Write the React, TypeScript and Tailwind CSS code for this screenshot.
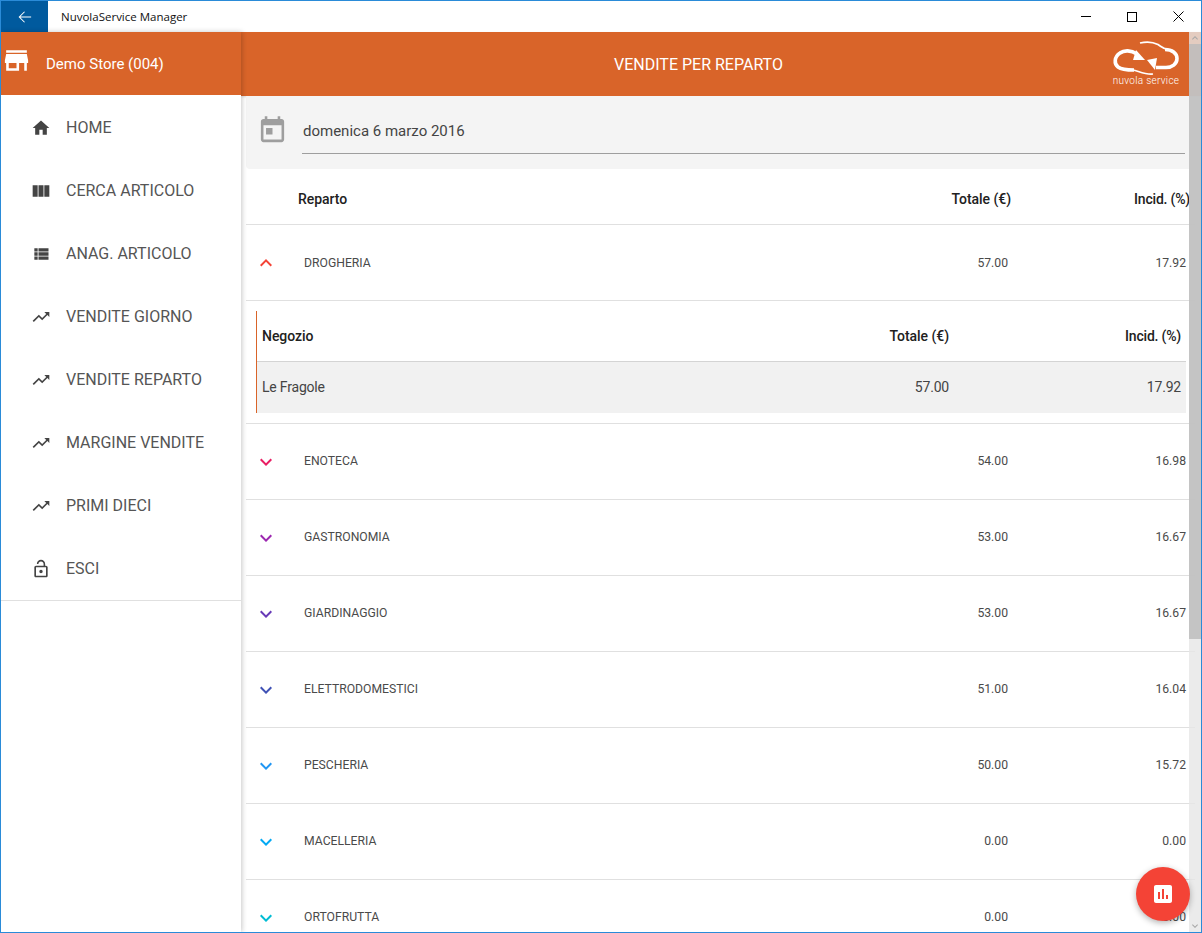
import React from "react";

const P = {
  home: "M10 20v-6h4v6h5v-8h3L12 3 2 12h3v8z",
  column: "M2 5h6v14H2zM9 5h6v14H9zM16 5h6v14h-6z",
  list: "M4 14h4v-4H4v4zm0 5h4v-4H4v4zM4 9h4V5H4v4zm5 5h12v-4H9v4zm0 5h12v-4H9v4zM9 5v4h12V5H9z",
  trend: "M16 6l2.29 2.29-4.88 4.88-4-4L2 16.59 3.41 18l6-6 4 4 6.3-6.29L22 12V6z",
  lock: "M12 17c1.1 0 2-.9 2-2s-.9-2-2-2-2 .9-2 2 .9 2 2 2zm6-9h-1V6c0-2.76-2.24-5-5-5S7 3.24 7 6h1.9c0-1.71 1.39-3.1 3.1-3.1 1.71 0 3.1 1.39 3.1 3.1v2H6c-1.1 0-2 .9-2 2v10c0 1.1.9 2 2 2h12c1.1 0 2-.9 2-2V10c0-1.1-.9-2-2-2zm0 12H6V10h12v10z",
  store: "M20 4H4v2h16V4zm1 10v-2l-1-5H4l-1 5v2h1v6h10v-6h4v6h2v-6h1zm-9 4H6v-4h6v4z",
  today: "M19 3h-1V1h-2v2H8V1H6v2H5c-1.11 0-1.99.9-1.99 2L3 19c0 1.1.89 2 2 2h14c1.1 0 2-.9 2-2V5c0-1.1-.9-2-2-2zm0 16H5V8h14v11zM7 10h5v5H7z",
  chart: "M19 3H5c-1.1 0-2 .9-2 2v14c0 1.1.9 2 2 2h14c1.1 0 2-.9 2-2V5c0-1.1-.9-2-2-2zM9 17H7v-7h2v7zm4 0h-2V7h2v10zm4 0h-2v-4h2v4z",
  down: "M7.41 8.59L12 13.17l4.59-4.58L18 10l-6 6-6-6 1.41-1.41z",
  up: "M7.41 15.41L12 10.83l4.59 4.58L18 14l-6-6-6 6z",
};

function Icon({ d, className, color }: { d: string; className?: string; color?: string }) {
  return (
    <svg viewBox="0 0 24 24" className={className} fill={color ?? "currentColor"}>
      <path d={d} />
    </svg>
  );
}

const nav: [string, string][] = [
  ["HOME", P.home],
  ["CERCA ARTICOLO", P.column],
  ["ANAG. ARTICOLO", P.list],
  ["VENDITE GIORNO", P.trend],
  ["VENDITE REPARTO", P.trend],
  ["MARGINE VENDITE", P.trend],
  ["PRIMI DIECI", P.trend],
  ["ESCI", P.lock],
];

const rows: [string, string, string, string][] = [
  ["ENOTECA", "54.00", "16.98", "#e91e63"],
  ["GASTRONOMIA", "53.00", "16.67", "#9c27b0"],
  ["GIARDINAGGIO", "53.00", "16.67", "#673ab7"],
  ["ELETTRODOMESTICI", "51.00", "16.04", "#3f51b5"],
  ["PESCHERIA", "50.00", "15.72", "#2196f3"],
  ["MACELLERIA", "0.00", "0.00", "#03a9f4"],
  ["ORTOFRUTTA", "0.00", "0.00", "#00bcd4"],
];

function Row({ name, total, inc, color, icon, first }: { name: string; total: string; inc: string; color: string; icon: string; first?: boolean }) {
  return (
    <div className="flex h-[76px] shrink-0 items-center border-b border-[#e0e0e0] pl-2 pr-[9px] text-[12.2px] text-[#4a4a4a]">
      <Icon d={icon} color={color} className="h-6 w-6 shrink-0" />
      <span className={first ? "ml-[26px] flex-1 pt-px" : "ml-[26px] flex-1"}>{name}</span>
      <span className={first ? "pt-px" : ""}>{total}</span>
      <span className={first ? "w-[178px] pt-px text-right" : "w-[178px] text-right"}>{inc}</span>
    </div>
  );
}

function Logo() {
  return (
    <div className="-ml-[46px] mt-[9px] flex w-[72px] flex-col items-center self-start">
      <svg viewBox="1110 41 72 36" className="h-9 w-[72px]" fill="none" stroke="white">
        <path d="M1137 54 C1131 50 1124 50 1120 53 C1114 57 1114 64 1118 67 C1122 70 1128 70 1134 70" strokeWidth="3.6" />
        <path d="M1133 70 C1138 71 1146 75 1153 74" strokeWidth="1.6" />
        <path d="M1136 50 L1145 60 L1133 60 Z" fill="white" stroke="none" />
        <path d="M1140 43 C1146 41.5 1153 42 1158 44.5 C1162 47 1164 49 1168 49.5" strokeWidth="1.8" />
        <path d="M1165 49.5 C1172 49.5 1177 53 1177 58.5 C1177 64 1172 67.5 1166 67.5 L1156 67.5" strokeWidth="3.6" />
        <path d="M1147 60 L1157 58 L1155 70 Z" fill="white" stroke="none" />
      </svg>
      <span className="-mt-[1px] whitespace-nowrap text-[10px] leading-[10px] font-light tracking-[0.3px] text-white">nuvola service</span>
    </div>
  );
}

export default function App() {
  return (
    <div className="relative flex h-[933px] w-[1202px] flex-col overflow-hidden border border-[#2a8bd8] bg-white font-['Roboto',sans-serif]">
      {/* Title bar */}
      <div className="flex h-[31px] shrink-0 items-center bg-white">
        <div className="flex h-full w-[47px] items-center justify-center bg-[#005a9e]">
          <svg viewBox="0 0 16 16" className="h-[14px] w-[14px]" fill="none" stroke="white" strokeWidth="1.2">
            <path d="M15 8H1.5M7.5 2L1.5 8l6 6" />
          </svg>
        </div>
        <span className="ml-[13px] flex-1 font-['Open_Sans',sans-serif] text-[11.5px] text-[#111111]">NuvolaService Manager</span>
        <div className="flex h-full items-center text-black">
          <div className="flex h-full w-[46px] items-center justify-center">
            <div className="h-px w-[10px] bg-black" />
          </div>
          <div className="flex h-full w-[46px] items-center justify-center">
            <div className="h-[10px] w-[10px] border border-black" />
          </div>
          <div className="flex h-full w-[46px] items-center justify-center">
            <svg viewBox="0 0 11 11" className="h-[11px] w-[11px]" stroke="black" strokeWidth="1" fill="none">
              <path d="M.5.5l10 10M10.5.5l-10 10" />
            </svg>
          </div>
        </div>
      </div>

      <div className="flex min-h-0 flex-1">
        {/* Sidebar */}
        <aside className="relative z-10 flex w-[240px] shrink-0 flex-col bg-white shadow-[1px_0_5px_rgba(0,0,0,0.22)]">
          <div className="flex h-[63px] shrink-0 items-center bg-[#d96429] text-white">
            <Icon d={P.store} className="-mt-[6px] h-[31px] w-[31px] shrink-0" />
            <span className="ml-[14px] pt-[2px] text-[15px]">Demo Store (004)</span>
          </div>
          <nav className="flex flex-col border-b border-[#e0e0e0] pt-px">
            {nav.map(([label, d], i) => (
              <div key={i} className="flex h-[63px] items-center text-[#555555]">
                <Icon d={d} className="ml-[30px] h-5 w-5 shrink-0 text-[#444444]" />
                <span className="ml-[15px] text-[16px]">{label}</span>
              </div>
            ))}
          </nav>
        </aside>

        {/* Main */}
        <main className="flex min-w-0 flex-1 flex-col">
          <header className="flex h-[64px] shrink-0 items-center bg-[#d96429] shadow-[0_1px_2px_rgba(0,0,0,0.12)]">
            <div className="w-[915px] pt-px text-center text-[16px] text-white">VENDITE PER REPARTO</div>
            <Logo />
          </header>
          <div className="ml-[5px] flex h-[73px] w-[943px] shrink-0 rounded-bl bg-[#f4f4f4] pl-[11px]">
            <Icon d={P.today} className="mt-[19px] h-[31px] w-[31px] shrink-0 text-[#9e9e9e]" />
            <div className="ml-[14px] mr-1 h-[58px] flex-1 border-b border-[#9e9e9e] pl-px pt-[25px] text-[15px] leading-5 text-[#444444]">
              domenica 6 marzo 2016
            </div>
          </div>

          <div className="ml-[5px] flex min-h-0 w-[949px] flex-1 flex-col overflow-hidden">
            <div className="flex h-[56px] shrink-0 items-center border-b border-[#e0e0e0] pl-[52px] pr-[5px] pt-[5px] text-[14px] font-medium tracking-[-0.05px] text-[#212121]">
              <span className="flex-1">Reparto</span>
              <span>Totale (€)</span>
              <span className="w-[179px] text-right tracking-[-0.2px]">Incid. (%)</span>
            </div>
            <Row name="DROGHERIA" total="57.00" inc="17.92" color="#f44336" icon={P.up} first />

            <div className="flex h-[123px] shrink-0 flex-col border-b border-[#e0e0e0] py-[10px] pl-[10px] pr-[9px]">
              <div className="flex flex-1 flex-col border-l border-[#d96429]">
                <div className="flex h-[51px] shrink-0 items-center border-b border-[#d4d4d4] px-[5px] text-[14px] font-medium tracking-[-0.05px] text-[#212121]">
                  <span className="flex-1">Negozio</span>
                  <span>Totale (€)</span>
                  <span className="w-[232px] text-right tracking-[-0.2px]">Incid. (%)</span>
                </div>
                <div className="flex flex-1 items-center bg-[#f1f1f1] px-[5px] text-[14px] tracking-[-0.2px] text-[#444444]">
                  <span className="flex-1">Le Fragole</span>
                  <span>57.00</span>
                  <span className="w-[232px] text-right">17.92</span>
                </div>
              </div>
            </div>

            {rows.map(([n, t, inc, c]) => (
              <Row key={n} name={n} total={t} inc={inc} color={c} icon={P.down} />
            ))}
          </div>
        </main>
      </div>

      {/* Overlay scrollbar */}
      <div className="absolute top-[31px] right-0 bottom-0 z-20 flex w-3 flex-col bg-[#e6e6e6]/80">
        <div className="flex h-[12px] shrink-0 items-center justify-center">
          <Icon d={P.up} className="h-[14px] w-[14px] text-[#a8a8a8]" />
        </div>
        <div className="h-[595px] shrink-0 bg-[#bababa]/80" />
        <div className="flex-1" />
        <div className="flex h-[12px] shrink-0 items-center justify-center">
          <Icon d={P.down} className="h-[14px] w-[14px] text-[#a8a8a8]" />
        </div>
      </div>

      {/* FAB */}
      <div className="absolute top-[866px] left-[1135px] z-30 flex h-[54px] w-[54px] items-center justify-center rounded-full bg-[#f44336] text-white shadow-[0_2px_6px_rgba(0,0,0,0.3)]">
        <Icon d={P.chart} className="h-6 w-6" />
      </div>
    </div>
  );
}
